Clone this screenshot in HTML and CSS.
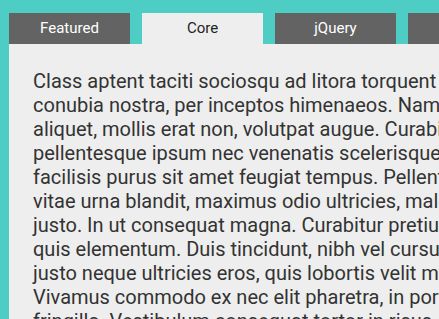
FILE: index.html
```html
<!DOCTYPE html>
<html>
<head>
<meta charset="utf-8">
<link rel="stylesheet" href="styles.css">
</head>
<body>
<div class="tabs">
  <div class="tab-bar">
    <div class="tab">Featured</div>
    <div class="tab active">Core</div>
    <div class="tab">jQuery</div>
    <div class="tab">Plugins</div>
  </div>
  <div class="panel">
    <p class="text">Class aptent taciti sociosqu ad litora torquent per<br>conubia nostra, per inceptos himenaeos. Nam<br>aliquet, mollis erat non, volutpat augue. Curabitur<br>pellentesque ipsum nec venenatis scelerisque.<br>facilisis purus sit amet feugiat tempus. Pellentesque<br>vitae urna blandit, maximus odio ultricies, malesuada<br>justo. In ut consequat magna. Curabitur pretium<br>quis elementum. Duis tincidunt, nibh vel cursus<br>justo neque ultricies eros, quis lobortis velit mi<br>Vivamus commodo ex nec elit pharetra, in porta<br>fringilla. Vestibulum consequat tortor in risus</p>
  </div>
</div>
</body>
</html>
```

FILE: styles.css
```css
html, body {
  margin: 0;
  padding: 0;
  background: #4ecdc4;
  overflow: hidden;
}
.tabs {
  padding: 13px 0 0 9px;
  font-family: Roboto, "Liberation Sans", sans-serif;
}
.tab-bar {
  display: flex;
  gap: 12px;
  width: 700px;
}
.tab {
  flex: none;
  width: 121px;
  height: 31px;
  line-height: 31px;
  text-align: center;
  background: #636363;
  color: #ffffff;
  font-size: 15px;
}
.tab.active {
  background: #eeeeee;
  color: #222222;
}
.panel {
  width: 700px;
  background: #eeeeee;
  padding: 25px 24px 40px;
}
.text {
  margin: 0;
  font-size: 20px;
  line-height: 24px;
  color: #333333;
  white-space: nowrap;
}
```
